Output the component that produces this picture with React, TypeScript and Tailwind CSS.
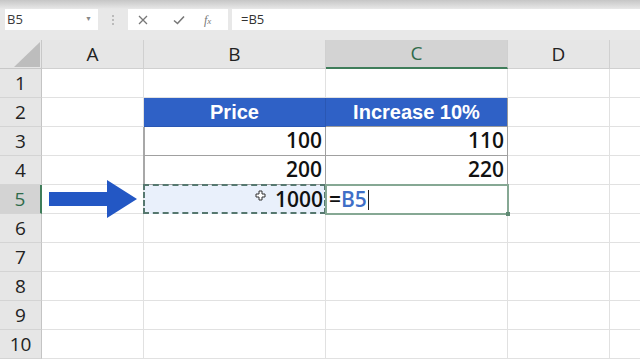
import React from 'react';

const gridCols = 'grid grid-cols-[42px_102px_182px_182px_102px_30px]';
const rowNums = [1, 2, 3, 4, 5, 6, 7, 8, 9, 10];

function Cell({ children, className = '' }: { children?: React.ReactNode; className?: string }) {
  return <div className={`h-[29px] border-r border-b border-[#e1e1e1] ${className}`}>{children}</div>;
}

function CursorCross() {
  return (
    <svg width="11" height="11" viewBox="0 0 11 11" className="absolute left-[111px] top-[5px]">
      <path d="M4 1h3v3h3v3H7v3H4V7H1V4h3z" fill="#fff" stroke="#333" strokeWidth="1" />
    </svg>
  );
}

const num = "text-[21px] text-[#111] font-['Open_Sans',sans-serif] font-semibold";

export default function App() {
  return (
    <div className="w-[640px] h-[360px] overflow-hidden bg-white relative font-['Liberation_Sans',Arial,sans-serif]">
      {/* toolbar */}
      <div className="h-[40px] bg-[#e8e8e8]">
        <div className="h-[9px] bg-linear-to-b from-[#c6c6c6] to-[#e8e8e8]" />
        <div className="flex items-center h-[21px]">
          <div className="ml-[5px] w-[93px] h-full bg-white flex items-center justify-between pl-[2px] pr-[6px] text-[13px] text-[#3a3a3a] font-['Open_Sans',sans-serif]">
            <span>B5</span>
            <span className="text-[7px] text-[#888]">▼</span>
          </div>
          <div className="w-[30px] flex justify-center">
            <div className="flex flex-col gap-[2px]">
              <span className="w-[2px] h-[2px] bg-[#bbb]" />
              <span className="w-[2px] h-[2px] bg-[#bbb]" />
              <span className="w-[2px] h-[2px] bg-[#bbb]" />
            </div>
          </div>
          <div className="w-[100px] h-full bg-white flex items-center">
            <svg width="10" height="10" viewBox="0 0 10 10" className="ml-[10px]">
              <path d="M1 1l8 8M9 1l-8 8" stroke="#777" strokeWidth="1.3" />
            </svg>
            <svg width="12" height="10" viewBox="0 0 12 10" className="ml-[25px]">
              <path d="M1 5.5l3.5 3L11 1.5" stroke="#777" strokeWidth="1.6" fill="none" />
            </svg>
            <span className="ml-[19px] text-[12px] italic text-[#777] font-['Liberation_Serif',serif]">
              f<span className="text-[9px]">x</span>
            </span>
          </div>
          <div className="ml-[4px] flex-1 h-full bg-white flex items-center pl-[9px] text-[13px] text-[#333] font-['Open_Sans',sans-serif]">
            =B5
          </div>
        </div>
      </div>

      {/* column header */}
      <div className={`${gridCols} h-[29px] bg-[#e6e6e6] text-[19px] text-[#222] font-['Open_Sans',sans-serif]`}>
        <div className="h-[29px] border-r border-b border-[#c8c8c8] relative">
          <svg width="42" height="29" viewBox="0 0 42 29" className="absolute inset-0">
            <path d="M40 2L40 27L14 27Z" fill="#bdbdbd" />
          </svg>
        </div>
        <div className="h-[29px] border-r border-b border-[#d0d0d0] flex items-center justify-center">A</div>
        <div className="h-[29px] border-r border-b border-[#d0d0d0] flex items-center justify-center">B</div>
        <div className="h-[29px] border-r border-[#d0d0d0] border-b-2 border-b-[#3f7d5a] bg-[#d3d3d3] flex items-center justify-center text-[#2f6b4b]">
          C
        </div>
        <div className="h-[29px] border-r border-b border-[#d0d0d0] flex items-center justify-center">D</div>
        <div className="h-[29px] border-b border-[#d0d0d0]" />
      </div>

      {/* rows */}
      {rowNums.map((r) => (
        <div key={r} className={`${gridCols}`}>
          <div
            className={`h-[29px] border-b border-[#d4d4d4] flex items-center justify-center text-[19px] font-['Open_Sans',sans-serif] ${
              r === 5
                ? 'bg-[#d3d3d3] text-[#2f6b4b] border-r-2 border-r-[#3f7d5a]'
                : 'bg-[#e6e6e6] text-[#222] border-r border-r-[#c4c4c4]'
            }`}
          >
            {r}
          </div>
          <Cell />
          {r === 2 ? (
            <>
              <div className="h-[29px] bg-[#2f61c6] border-r border-b border-[#2a57b3] flex items-center justify-center text-white font-bold text-[20px]">
                Price
              </div>
              <div className="h-[29px] bg-[#2f61c6] border-r border-b border-[#9a9a9a] flex items-center justify-center text-white font-bold text-[20px]">
                Increase 10%
              </div>
            </>
          ) : r === 3 || r === 4 ? (
            <>
              <div className={`h-[29px] border-l-2 border-l-[#a8a8a8] -ml-[1px] border-r border-b border-[#a0a0a0] flex items-center justify-end pr-[3px] ${num}`}>
                {r === 3 ? '100' : '200'}
              </div>
              <div className={`h-[29px] border-r border-b border-[#a0a0a0] flex items-center justify-end pr-[3px] ${num}`}>
                {r === 3 ? '110' : '220'}
              </div>
            </>
          ) : r === 5 ? (
            <>
              <div className={`h-[29px] relative bg-[#e9f0fb] flex items-center justify-end pr-[3px] ${num}`}>
                <div className="absolute -left-[1px] -top-[1px] right-0 bottom-0 border-2 border-dashed border-[#56786f]" />
                <CursorCross />
                <span className="relative">1000</span>
              </div>
              <div className={`h-[29px] relative flex items-center pl-[3px] ${num}`}>
                <div className="absolute -left-[1px] -top-[1px] -right-[1px] -bottom-[1px] border-2 border-[#86a894]" />
                <div className="absolute -right-[2px] -bottom-[2px] w-[4px] h-[4px] bg-[#5f8a73]" />
                <span className="relative text-[#111]">=</span>
                <span className="relative text-[#3f6fc7]">B5</span>
                <span className="relative ml-[1px] w-[1px] h-[20px] bg-[#222]" />
              </div>
            </>
          ) : (
            <>
              <Cell />
              <Cell />
            </>
          )}
          <Cell />
          <div className="h-[29px] border-b border-[#e1e1e1]" />
        </div>
      ))}

      {/* arrow overlay */}
      <svg width="92" height="40" viewBox="0 0 92 40" className="absolute left-[48px] top-[179px]">
        <path d="M1 13H59V1L89 20L59 39V27H1Z" fill="#2357c4" />
      </svg>
    </div>
  );
}
